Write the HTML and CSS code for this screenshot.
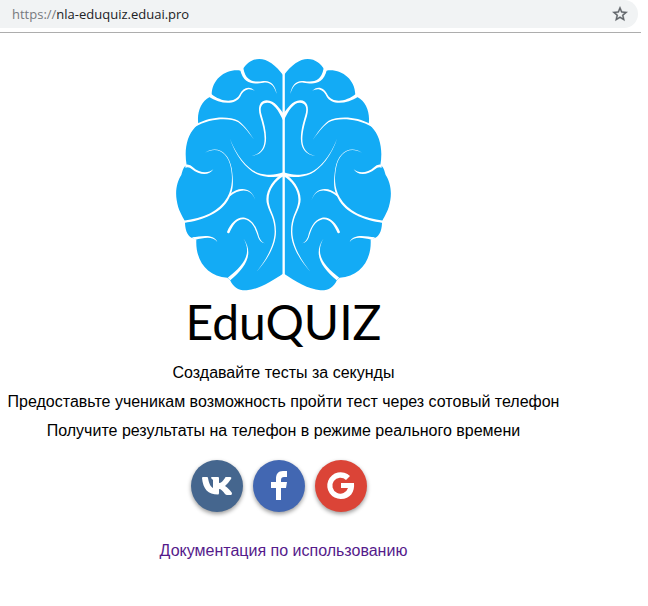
FILE: index.html
```html
<!DOCTYPE html>
<html lang="ru">
<head>
<meta charset="utf-8">
<title>EduQUIZ</title>
<link rel="stylesheet" href="styles.css">
</head>
<body>
<header class="toolbar">
  <div class="address">
    <a class="url" href="#"><span class="scheme">https://</span>nla-eduquiz.eduai.pro</a>
    <button class="star" type="button" aria-label="Добавить в закладки">
      <svg viewBox="0 0 24 24" width="18" height="18" aria-hidden="true"><path d="M22 9.24l-7.19-.62L12 2 9.19 8.63 2 9.24l5.46 4.73L5.82 21 12 17.27 18.18 21l-1.63-7.03L22 9.24zM12 15.4l-3.76 2.27 1-4.28-3.32-2.88 4.38-.38L12 6.1l1.71 4.04 4.38.38-3.32 2.88 1 4.28L12 15.4z"/></svg>
    </button>
  </div>
</header>
<main class="page">
  <svg class="brain" viewBox="18 24 648 702" aria-hidden="true">
    <defs>
      <g id="half">
        <path class="lobe" d="M341 77C317 45 292 27 268 27C244 27 228 42 218 59L212 62C170 55 126 85 125 134L119 141C92 155 80 188 85 222L76 231C50 258 42 300 50 346C40 350 38 362 34 375C22 393 15 420 20 450C24 480 38 500 44 512L45 520C46 545 55 562 70 565L79 570C76 630 110 680 172 683L180 690C190 712 205 722 230 721C265 718 305 695 341 670Z"/>
        <g class="groove">
          <path d="M210 58C222 110 258 101 280 98C302 94 314 110 320 132C317 106 302 90 280 93C258 96 228 100 220 55Z"/>
          <path d="M116 140C150 161 195 169 212 138C222 117 240 113 255 124C240 107 220 111 208 135C192 162 150 154 124 132Z"/>
          <path d="M74 231C120 204 180 202 205 217C225 231 240 254 253 270C240 250 225 227 205 212C175 197 120 199 80 222Z"/>
          <path d="M340 212C325 180 310 158 292 158C274 158 268 174 275 195C292 250 302 310 245 318C296 306 288 255 270 198C262 172 270 151 290 151C315 151 330 178 340 190Z"/>
          <path d="M180 266C200 320 235 357 262 368C290 377 315 376 340 367L340 378C310 384 280 381 258 371C228 355 195 315 180 266Z"/>
          <path d="M105 308C140 285 176 305 185 355C191 395 191 420 177 445C155 489 100 511 42 519L40 512C100 505 148 485 172 442C189 410 188 380 182 350C174 312 145 286 105 308Z"/>
          <path d="M178 434C205 408 245 410 256 450C243 414 210 414 178 440Z"/>
          <path d="M46 344Q60 341 68 351C90 371 115 371 130 358C118 377 90 377 65 357Q58 350 46 353Z"/>
          <path d="M171 546C183 515 205 498 225 503C252 510 262 540 267 560Q273 575 284 580Q271 577 265 563C256 535 247 513 223 508C205 505 190 520 178 549Q173 552 171 546Z"/>
          <path d="M66 562C95 559 130 550 142 576C128 557 100 564 75 570Z"/>
          <path d="M173 683C215 650 250 615 220 565C255 615 223 655 181 691Z"/>
          <path d="M340 370C308 387 280 430 292 465C298 487 314 505 314 545C313 590 284 635 260 665C287 635 318 590 318 545C318 503 303 487 298 465C288 430 313 393 340 379Z"/>
        </g>
      </g>
    </defs>
    <use href="#half"/>
    <use href="#half" transform="translate(681 0) scale(-1 1)"/>
    <path class="split" d="M341 70V676"/>
  </svg>
  <h1 class="name">EduQUIZ</h1>
  <div class="pitch">
    <p>Создавайте тесты за секунды</p>
    <p>Предоставьте ученикам возможность пройти тест через сотовый телефон</p>
    <p>Получите результаты на телефон в режиме реального времени</p>
  </div>
  <nav class="logins">
    <a class="login vk" href="#" aria-label="ВКонтакте">
      <svg viewBox="0 0 52 52" aria-hidden="true"><path d="M27 34.500C17 34.500 12 29 11 18Q11 17 12 17H16Q17 17 17 18C18 24 20 27 22 28V20L20 18Q20 17 21 17H27Q28 17 28 18V23C30 23 32 21 34 18Q34 17 35 17H39Q41 17 40 19C38 22 36 24 34 26C37 28 39 30 41 33Q41 35 40 35H36Q35 35 34 34C32 31 30 29 28 29V33Q28 34.500 27 34.500Z"/></svg>
    </a>
    <a class="login fb" href="#" aria-label="Facebook">
      <svg viewBox="0 0 52 52" aria-hidden="true"><path d="M23 40V28H18V22H23V19C23 14 25 11 30 11H34V17H31C29 17 28 18 28 20V22H34L33 28H28V40Z"/></svg>
    </a>
    <a class="login google" href="#" aria-label="Google">
      <svg viewBox="0 0 52 52" aria-hidden="true"><path d="M26 23H39C40 32 35 39 26 39A13.400 13.400 0 1 1 35 16L31 20A8 8 0 1 0 33 28H26Z"/></svg>
    </a>
  </nav>
  <a class="docs" href="#">Документация по использованию</a>
</main>
</body>
</html>
```
FILE: styles.css
```css
* { box-sizing: border-box; }

body {
  margin: 0;
  background: #fff;
  color: #000;
  font: 16px/29px "Liberation Sans", Arial, sans-serif;
}

.toolbar {
  margin-right: 7px;
  padding: 0 3px 4px 0;
  border-bottom: 1px solid #adadad;
}

.address {
  display: flex;
  align-items: center;
  justify-content: space-between;
  height: 28px;
  padding: 0 9px 0 12px;
  border-radius: 0 14px 14px 0;
  background: #f1f3f4;
}

.url {
  color: #202124;
  font: 13px/28px "Open Sans", "Noto Sans", sans-serif;
  text-decoration: none;
}

.scheme { color: #777a7e; }

.star {
  display: flex;
  padding: 0;
  border: 0;
  background: none;
  fill: #5f6368;
  stroke: #5f6368;
  stroke-width: 0.5;
}

.page {
  display: flex;
  flex-direction: column;
  align-items: center;
  padding: 25px 81px 24px 0;
}

.brain { width: 216px; height: 234px; }
.lobe { fill: #13abf5; }
.groove { fill: #fff; }
.split { stroke: #fff; stroke-width: 7; }

.name {
  margin: 0;
  padding-bottom: 6px;
  font: 400 48px/60px Lato, sans-serif;
}

.pitch { text-align: center; white-space: nowrap; }
.pitch p { margin: 0; }

.logins {
  display: flex;
  gap: 10px;
  padding: 15px 10px 24px 0;
}

.login {
  width: 52px;
  height: 52px;
  border-radius: 50%;
  box-shadow: 0 2px 4px rgba(0, 0, 0, 0.4);
  fill: #fff;
}

.login svg { display: block; }
.vk { background: #45668e; }
.fb { background: #4267b2; }
.google { background: #db4437; }

.docs { color: #551a8b; text-decoration: none; }
```
